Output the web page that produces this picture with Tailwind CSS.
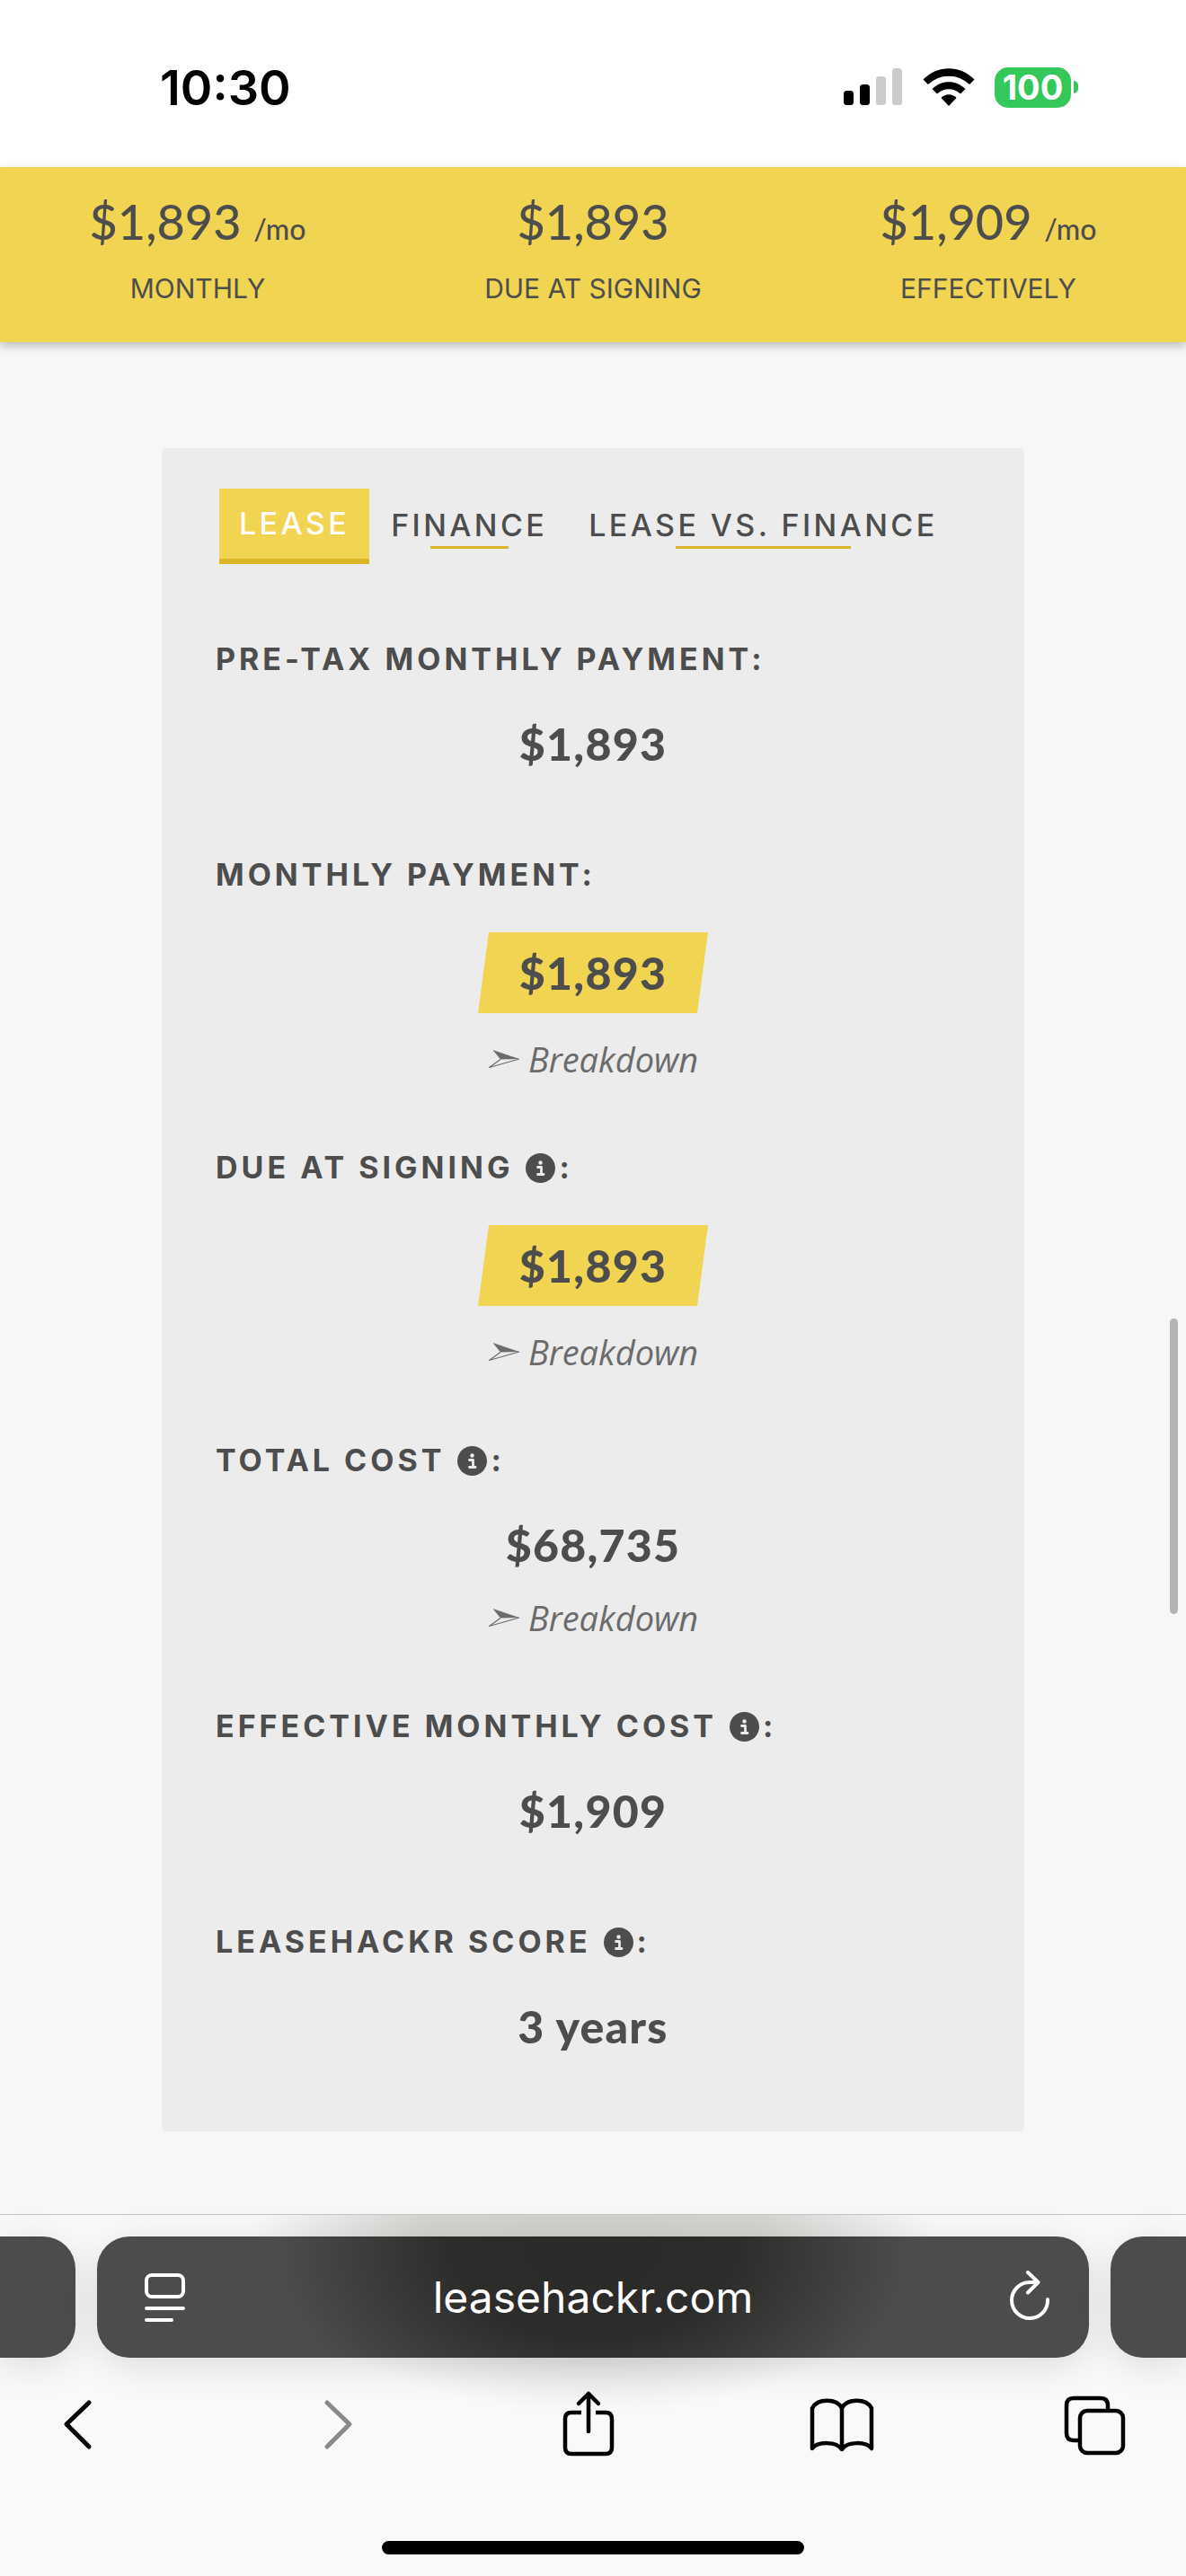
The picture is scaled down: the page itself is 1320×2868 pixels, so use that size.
<!DOCTYPE html>
<html lang="en">
<head>
  <meta charset="UTF-8" />
  <meta name="viewport" content="width=device-width, initial-scale=1" />
  <title>Leasehackr Calculator</title>
  <script src="https://cdn.jsdelivr.net/npm/@tailwindcss/browser@4"></script>
</head>
<body class="relative flex min-h-screen flex-col bg-[#f7f7f7] font-['Inter',sans-serif] text-[#4d4d4d]">

  <!-- Shared icons -->
  <svg class="hidden">
    <symbol id="info" viewBox="0 0 33 33">
      <circle cx="16.5" cy="16.5" r="16.5" fill="#4d4d4d" />
      <circle cx="16.5" cy="10.5" r="2.2" fill="#ececec" />
      <path d="M13.5 15.5h4v8M13.5 23.5h6.5" fill="none" stroke="#ececec" stroke-width="2.8" stroke-linecap="round" stroke-linejoin="round" />
    </symbol>
    <symbol id="arrow" viewBox="0 0 36 22">
      <path d="M5.500 1L35 11L14 11.500Z" fill="#6b6b6b" />
      <path d="M14 11.500L1.500 20.500L35 11" fill="none" stroke="#6b6b6b" stroke-width="1.200" stroke-linejoin="round" />
    </symbol>
  </svg>

  <!-- Status bar -->
  <div class="flex h-[186px] items-center justify-between bg-white pt-[8px] pr-[120px] pl-[178px] text-black">
    <span class="pt-[2px] text-[54px] leading-[60px] font-semibold">10:30</span>
    <div class="flex items-center gap-[22px]">
      <svg class="h-[42px] w-[66px]" viewBox="0 0 66 42">
        <rect x="0" y="25" width="11" height="16" rx="3.500" />
        <rect x="18" y="18" width="11" height="23" rx="3.500" />
        <rect x="36" y="9" width="11" height="32" rx="3.500" fill="#cbcbcb" />
        <rect x="54" y="0" width="11" height="41" rx="3.500" fill="#cbcbcb" />
      </svg>
      <svg class="h-[42px] w-[58px]" viewBox="0 0 58 42">
        <path d="M0.500 12.500C16-4 42-4 57.500 12.500L52 18C39 5.500 19 5.500 6 18Z" />
        <path d="M10.500 23C21 12.500 37 12.500 47.500 23L42 28.500C34.500 21.500 23.500 21.500 16 28.500Z" />
        <path d="M20.500 33C25.500 28 32.500 28 37.500 33L29 42Z" />
      </svg>
      <div class="flex items-center gap-[3px]">
        <span class="flex h-[45px] w-[85px] items-center justify-center rounded-[15px] bg-[#34c759] text-[38px] leading-[45px] font-bold text-white">100</span>
        <span class="h-[14px] w-[5px] rounded-r-full bg-[#34c759]"></span>
      </div>
    </div>
  </div>

  <!-- Summary -->
  <header class="grid h-[195px] grid-cols-3 bg-[#f1d452] pt-[26px] text-center shadow-[0_4px_10px_rgba(0,0,0,0.25)]">
    <div>
      <p class="font-['Lato',sans-serif] text-[54px] leading-[70px] font-medium">$1,893 <span class="text-[32px] leading-none">/mo</span></p>
      <p class="mt-[19px] text-[30px] leading-[40px]">MONTHLY</p>
    </div>
    <div>
      <p class="font-['Lato',sans-serif] text-[54px] leading-[70px] font-medium">$1,893</p>
      <p class="mt-[19px] text-[30px] leading-[40px]">DUE AT SIGNING</p>
    </div>
    <div>
      <p class="font-['Lato',sans-serif] text-[54px] leading-[70px] font-medium">$1,909 <span class="text-[32px] leading-none">/mo</span></p>
      <p class="mt-[19px] text-[30px] leading-[40px]">EFFECTIVELY</p>
    </div>
  </header>

  <main class="flex-1 px-[180px] pt-[118px]">
    <div class="rounded-[6px] bg-[#ececec] px-[60px] pt-[45px] pb-[87px]">

      <!-- Tabs -->
      <nav class="ml-[4px] flex h-[84px] gap-[2px] text-[34px] leading-[40px] font-medium tracking-widest whitespace-nowrap">
        <button class="border-b-[6px] border-[#dcb428] bg-[#f1d452] px-[22px] text-white">LEASE</button>
        <button class="flex flex-col items-center px-[22px] pt-[21px]">FINANCE
          <span class="mt-[3px] h-[3px] w-1/2 bg-[#dcb428]"></span>
        </button>
        <button class="flex flex-col items-center px-[22px] pt-[21px]">LEASE VS. FINANCE
          <span class="mt-[3px] h-[3px] w-1/2 bg-[#dcb428]"></span>
        </button>
      </nav>

      <section class="mt-[82px]">
        <h2 class="text-[34px] leading-[48px] font-bold tracking-[4px]">PRE-TAX MONTHLY PAYMENT:</h2>
        <p class="mt-[40px] text-center font-['Lato',sans-serif] text-[50px] leading-[60px] font-black tracking-wide">$1,893</p>
      </section>

      <section class="mt-[92px]">
        <h2 class="text-[34px] leading-[48px] font-bold tracking-[4px]">MONTHLY PAYMENT:</h2>
        <p class="mx-auto mt-[40px] w-[256px] bg-[#f1d452] text-center font-['Lato',sans-serif] text-[50px] leading-[90px] font-black tracking-wide [clip-path:polygon(12px_0,100%_0,calc(100%-12px)_100%,0_100%)]">$1,893</p>
        <a href="#" class="mt-[27px] flex items-center justify-center gap-[9px] font-['Open_Sans',sans-serif] text-[38px] leading-[48px] text-[#6b6b6b] italic">
          <svg class="h-[22px] w-[36px]"><use href="#arrow" /></svg>Breakdown
        </a>
      </section>

      <section class="mt-[73px]">
        <h2 class="flex items-center text-[34px] leading-[48px] font-bold tracking-[4px]">DUE AT SIGNING
          <svg class="mr-[4px] ml-[14px] size-[33px]"><use href="#info" /></svg>:
        </h2>
        <p class="mx-auto mt-[40px] w-[256px] bg-[#f1d452] text-center font-['Lato',sans-serif] text-[50px] leading-[90px] font-black tracking-wide [clip-path:polygon(12px_0,100%_0,calc(100%-12px)_100%,0_100%)]">$1,893</p>
        <a href="#" class="mt-[27px] flex items-center justify-center gap-[9px] font-['Open_Sans',sans-serif] text-[38px] leading-[48px] text-[#6b6b6b] italic">
          <svg class="h-[22px] w-[36px]"><use href="#arrow" /></svg>Breakdown
        </a>
      </section>

      <section class="mt-[73px]">
        <h2 class="flex items-center text-[34px] leading-[48px] font-bold tracking-[4px]">TOTAL COST
          <svg class="mr-[4px] ml-[14px] size-[33px]"><use href="#info" /></svg>:
        </h2>
        <p class="mt-[40px] text-center font-['Lato',sans-serif] text-[50px] leading-[60px] font-black tracking-wide">$68,735</p>
        <a href="#" class="mt-[27px] flex items-center justify-center gap-[9px] font-['Open_Sans',sans-serif] text-[38px] leading-[48px] text-[#6b6b6b] italic">
          <svg class="h-[22px] w-[36px]"><use href="#arrow" /></svg>Breakdown
        </a>
      </section>

      <section class="mt-[73px]">
        <h2 class="flex items-center text-[34px] leading-[48px] font-bold tracking-[4px]">EFFECTIVE MONTHLY COST
          <svg class="mr-[4px] ml-[14px] size-[33px]"><use href="#info" /></svg>:
        </h2>
        <p class="mt-[40px] text-center font-['Lato',sans-serif] text-[50px] leading-[60px] font-black tracking-wide">$1,909</p>
      </section>

      <section class="mt-[92px]">
        <h2 class="flex items-center text-[34px] leading-[48px] font-bold tracking-[4px]">LEASEHACKR SCORE
          <svg class="mr-[4px] ml-[14px] size-[33px]"><use href="#info" /></svg>:
        </h2>
        <p class="mt-[40px] text-center font-['Lato',sans-serif] text-[50px] leading-[60px] font-black tracking-wide">3 years</p>
      </section>
    </div>
  </main>

  <!-- Scroll indicator -->
  <div class="absolute top-[1468px] right-[9px] h-[329px] w-[9px] rounded-full bg-[#b4b4b4]"></div>

  <!-- Browser toolbar -->
  <footer class="border-t border-[#c4c4c4] bg-[#f9f9f9] bg-[radial-gradient(ellipse_380px_200px_at_50%_20px,#cfcfcc_0%,#d3d3d0_50%,#f9f9f9_100%)] pt-[24px] pb-[24px]">
    <div class="flex h-[135px] gap-[24px]">
      <div class="flex-1 rounded-r-[36px] bg-[#4c4c4c] shadow-[0_8px_40px_rgba(0,0,0,0.12)]"></div>
      <div class="flex w-[1104px] items-center justify-between rounded-[36px] bg-[#4c4c4c] bg-[radial-gradient(ellipse_350px_230px_at_50%_10px,#2a2a28_0%,#2c2c2a_45%,#4c4c4c_100%)] px-[37px] shadow-[0_8px_40px_rgba(0,0,0,0.12)]">
        <button aria-label="Page menu">
          <svg class="h-[60px] w-[70px]" viewBox="0 0 70 60" fill="none" stroke="#fff" stroke-width="4" stroke-linecap="round">
            <rect x="18" y="5" width="41" height="24" rx="6" />
            <path d="M18 42h41M18 55h28" />
          </svg>
        </button>
        <span class="text-[48px] leading-[60px] text-white">leasehackr.com</span>
        <button aria-label="Reload">
          <svg class="h-[60px] w-[70px]" viewBox="0 0 70 60" fill="none" stroke="#fff" stroke-width="4" stroke-linecap="round" stroke-linejoin="round">
            <path d="M61 32A20 20 0 1 1 41 13H50M39 2L50.500 13L39 24.500" />
          </svg>
        </button>
      </div>
      <div class="flex-1 rounded-l-[36px] bg-[#4c4c4c] shadow-[0_8px_40px_rgba(0,0,0,0.12)]"></div>
    </div>

    <div class="mt-[36px] flex justify-between pr-[64px] pl-[49px]">
      <button aria-label="Back">
        <svg class="size-[74px]" viewBox="0 0 74 74" fill="none" stroke="#000" stroke-width="5" stroke-linecap="round" stroke-linejoin="round"><path d="M50 14L25 38L50 63" /></svg>
      </button>
      <button aria-label="Forward" disabled>
        <svg class="size-[74px]" viewBox="0 0 74 74" fill="none" stroke="#8a8a8a" stroke-width="5" stroke-linecap="round" stroke-linejoin="round"><path d="M32 14L57 38L32 63" /></svg>
      </button>
      <button aria-label="Share">
        <svg class="size-[74px]" viewBox="0 0 74 74" fill="none" stroke="#000" stroke-width="4.500" stroke-linecap="round" stroke-linejoin="round">
          <path d="M31 25H20Q13 25 13 32V64Q13 71 20 71H58Q65 71 65 64V32Q65 25 58 25H47" stroke-linecap="butt" />
          <path d="M39 46V4M28 15L39 4L50 15" />
        </svg>
      </button>
      <button aria-label="Bookmarks">
        <svg class="size-[74px]" viewBox="0 0 74 74" fill="none" stroke="#000" stroke-width="4.500" stroke-linecap="round" stroke-linejoin="round">
          <path d="M38 20C32 9 11 9 5 20V65C11 57 32 57 38 66C44 57 65 57 71 65V20C65 9 44 9 38 20V66" />
        </svg>
      </button>
      <button aria-label="Tabs">
        <svg class="size-[74px]" viewBox="0 0 74 74" fill="none" stroke="#000" stroke-width="4.500">
          <path d="M19 56H13Q5 56 5 48V17Q5 9 13 9H43Q51 9 51 17V22" />
          <rect x="20" y="23" width="48" height="47" rx="8" />
        </svg>
      </button>
    </div>

    <div class="mx-auto mt-[94px] h-[15px] w-[470px] rounded-full bg-black"></div>
  </footer>

</body>
</html>
